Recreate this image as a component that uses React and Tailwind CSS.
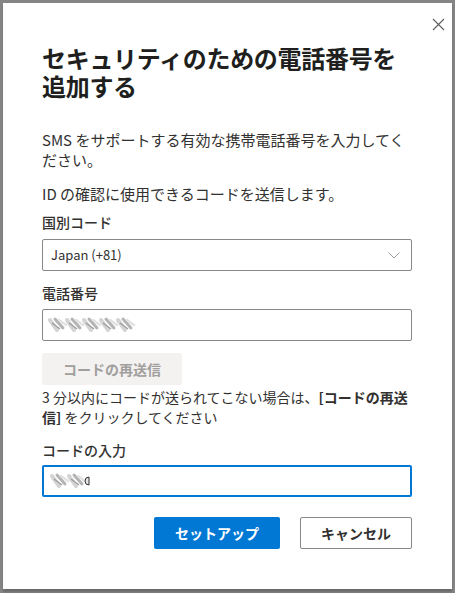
import React from "react";

const font = { fontFamily: '"Noto Sans CJK JP", "Noto Sans", sans-serif' };

function Scribble({ count }) {
  const items = Array.from({ length: count });
  return (
    <svg width={count * 17 + 6} height="20" viewBox={`0 0 ${count * 17 + 6} 20`}>
      {items.map((_, i) => (
        <g key={i} transform={`translate(${i * 17} 0)`}>
          <path d="M2 5 L9 15" fill="none" stroke="#d4d4d4" strokeWidth="4" strokeLinecap="round" />
          <path d="M7 4 L15 13" fill="none" stroke="#b4b4b4" strokeWidth="3" strokeLinecap="round" />
          <path d="M11 5 L18 10" fill="none" stroke="#e2e2e2" strokeWidth="2.5" strokeLinecap="round" />
          <path d="M4 8 L12 14" fill="none" stroke="#9a9a9a" strokeWidth="1.2" />
        </g>
      ))}
    </svg>
  );
}

export default function App() {
  return (
    <div className="w-[455px] h-[593px] bg-[#858585] overflow-hidden pt-[3px] pl-[3px]" style={font}>
      <div className="relative w-[449px] h-[586px] bg-white shadow-[0_3px_2px_rgba(0,0,0,0.2)] pl-[39px] pr-[40px] pt-[41px] text-[#323130]">
        <button className="absolute left-[428px] top-[14px] w-[15px] h-[15px] flex items-center justify-center">
          <svg width="13" height="13" viewBox="0 0 13 13">
            <path d="M1 1 L12 12 M12 1 L1 12" stroke="#605e5c" strokeWidth="1.1" fill="none" />
          </svg>
        </button>
        <h1 className="text-[24px] leading-[28px] font-bold text-[#201f1e] tracking-[-0.3px]">
          セキュリティのための電話番号を<br />追加する
        </h1>
        <p className="mt-[30px] text-[15px] leading-[20px]">
          SMS をサポートする有効な携帯電話番号を入力してください。
        </p>
        <p className="mt-[14px] text-[15px] leading-[20px]">ID の確認に使用できるコードを送信します。</p>
        <div className="mt-[8px] text-[14px] leading-[20px] font-medium">国別コード</div>
        <div className="mt-[7px] h-[32px] w-[370px] border border-[#8a8886] rounded-[2px] flex items-center justify-between pl-[8px] pr-[11px]">
          <span className="text-[13px] text-[#323130]">Japan (+81)</span>
          <svg width="12" height="7" viewBox="0 0 12 7">
            <path d="M0.5 0.5 L6 6 L11.5 0.5" stroke="#a19f9d" strokeWidth="1" fill="none" />
          </svg>
        </div>
        <div className="mt-[12px] text-[14px] leading-[20px] font-medium">電話番号</div>
        <div className="mt-[6px] h-[32px] w-[370px] border border-[#8a8886] rounded-[2px] flex items-center pl-[5px]">
          <Scribble count={5} />
        </div>
        <button
          disabled
          className="mt-[12px] h-[32px] w-[140px] bg-[#f3f2f1] rounded-[2px] text-[14px] font-semibold text-[#a19f9d] flex items-center justify-center"
        >
          コードの再送信
        </button>
        <p className="mt-[2px] text-[14px] leading-[20px]">
          3 分以内にコードが送られてこない場合は、<span className="font-bold">[コードの再送<br />信]</span> をクリックしてください
        </p>
        <div className="mt-[13px] text-[14px] leading-[20px] font-medium">コードの入力</div>
        <div className="mt-[5px] h-[32px] w-[370px] border-2 border-[#0078d4] rounded-[2px] flex items-center pl-[6px]">
          <Scribble count={2} />
          <svg width="6" height="10" viewBox="0 0 6 10" className="-ml-[6px]">
            <path d="M5 1 A4 4 0 0 0 5 9 Z" stroke="#323130" strokeWidth="1" fill="#e5e5e5" />
          </svg>
        </div>
        <div className="mt-[20px] w-[370px] flex justify-end gap-[20px]">
          <button className="h-[32px] w-[126px] bg-[#0078d4] rounded-[2px] text-white text-[14px] font-semibold flex items-center justify-center">
            セットアップ
          </button>
          <button className="h-[32px] w-[112px] bg-white border border-[#8a8886] rounded-[2px] text-[#323130] text-[14px] font-semibold flex items-center justify-center">
            キャンセル
          </button>
        </div>
      </div>
    </div>
  );
}
